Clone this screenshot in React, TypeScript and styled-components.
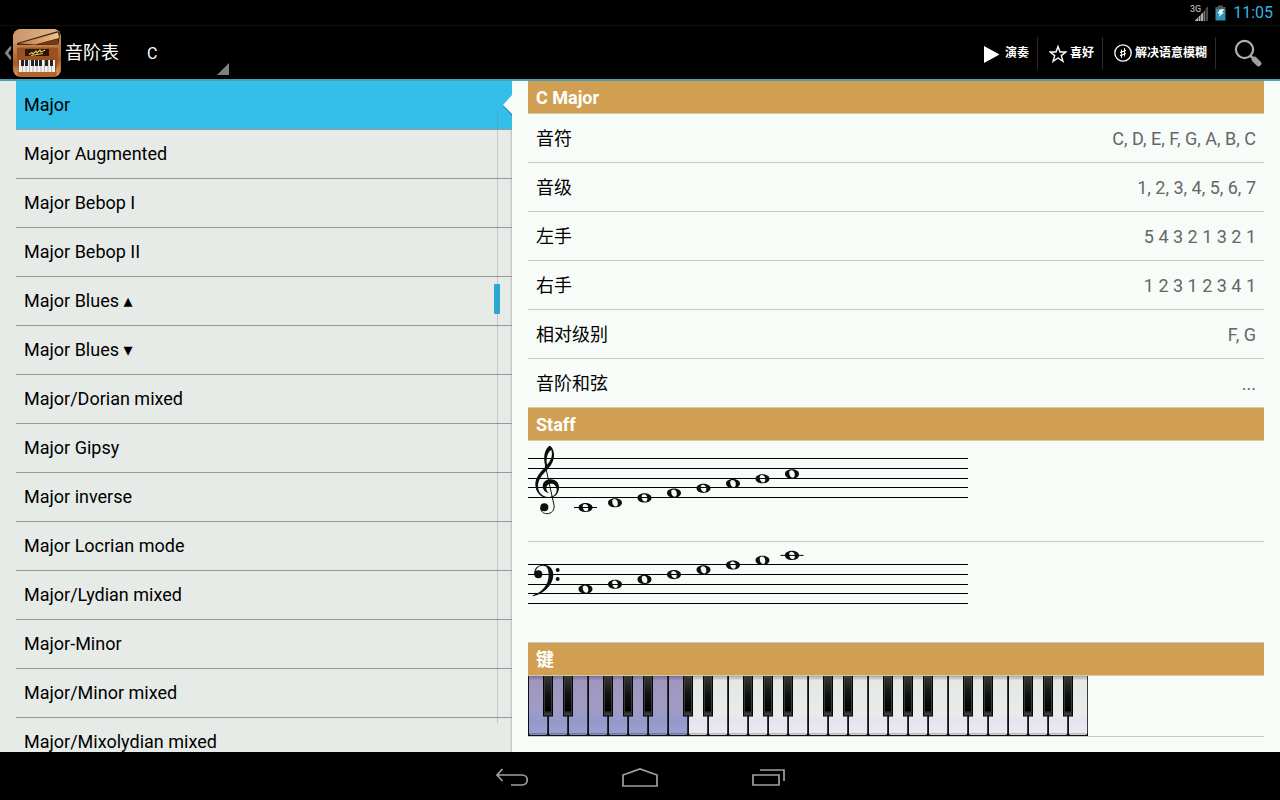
import React, { useState } from 'react';
import styled, { createGlobalStyle, css } from 'styled-components';

const GlobalStyle = createGlobalStyle`
  *, *::before, *::after { box-sizing: border-box; }
  html, body { margin: 0; background: #000; }
  body, button, select {
    font-family: Roboto, "Noto Sans CJK SC", "DejaVu Sans", sans-serif;
  }
`;

const Screen = styled.div`
  display: flex;
  flex-direction: column;
  height: 100vh;
  overflow: hidden;
  background: #000;
`;

/* ---------- status bar ---------- */

const StatusBar = styled.div`
  display: flex;
  align-items: center;
  justify-content: flex-end;
  flex: none;
  height: 25px;
  padding-right: 7px;
  color: #33b5e5;
  font-size: 16px;
  line-height: 24px;
`;

const StatusIcon = styled.svg`
  display: block;
  margin-right: 6px;
`;

/* ---------- action bar ---------- */

const ActionBar = styled.header`
  display: flex;
  align-items: center;
  flex: none;
  height: 56px;
  border-top: 1px solid #101010;
  border-bottom: 2px solid #4a9fbb;
  color: #fff;
`;

const HomeButton = styled.button`
  display: flex;
  align-items: center;
  padding: 0 0 0 4px;
  border: 0;
  background: none;
  cursor: pointer;

  svg { display: block; }
`;

const Title = styled.h1`
  margin: 0 20px 0 4px;
  font-size: 18px;
  line-height: 24px;
  font-weight: 400;
`;

const Spinner = styled.label`
  display: flex;
  align-items: flex-end;
  align-self: stretch;
  width: 90px;
  padding-bottom: 4px;
`;

const KeySelect = styled.select`
  appearance: none;
  flex: 1;
  align-self: stretch;
  min-width: 0;
  padding: 5px 0 0 8px;
  border: 0;
  background: none;
  color: #fff;
  font-size: 16px;
  cursor: pointer;

  option { color: #000; }
`;

const Actions = styled.div`
  display: flex;
  align-items: center;
  margin-left: auto;
`;

const ActionButton = styled.button`
  display: flex;
  align-items: center;
  gap: 3px;
  height: 32px;
  padding: 0 8px 0 11px;
  border: 0;
  border-right: 1px solid #2b2b2b;
  background: none;
  color: #fff;
  font-size: 12px;
  line-height: 16px;
  font-weight: 700;
  cursor: pointer;
`;

const SearchButton = styled.button`
  display: flex;
  align-items: center;
  justify-content: center;
  width: 64px;
  height: 48px;
  padding: 0;
  border: 0;
  background: none;
  cursor: pointer;
`;

/* ---------- panes ---------- */

const Panes = styled.main`
  display: flex;
  flex: 1;
  min-height: 0;
`;

const ListPane = styled.nav`
  position: relative;
  flex: none;
  width: 40%;
  overflow: hidden;
  padding-left: 16px;
  background: #e7ebe8;
  box-shadow: inset -2px 0 2px -1px #b9bdba;
`;

const ScaleList = styled.ul`
  margin: 0;
  padding: 0;
  list-style: none;
`;

const ScaleItem = styled.li`
  position: relative;
  border-bottom: 1px solid #979a98;
`;

const ScaleButton = styled.button<{ $active: boolean }>`
  display: block;
  width: 100%;
  height: 48px;
  padding: 0 8px;
  border: 0;
  background: none;
  color: #000;
  font-size: 18px;
  line-height: 24px;
  text-align: left;
  cursor: pointer;
  ${p => p.$active && css`background: #33bfe9;`}
`;

const Pointer = styled.svg`
  position: absolute;
  right: 0;
  top: 12px;
`;

const ScrollTrack = styled.div`
  position: absolute;
  top: 29px;
  right: 14px;
  bottom: 29px;
  width: 1px;
  background: rgba(110, 120, 120, 0.3);
`;

const ScrollThumb = styled.div`
  position: absolute;
  top: 174px;
  left: -3px;
  width: 6px;
  height: 30px;
  border-radius: 1px;
  background: #2aa7d2;
`;

const DetailPane = styled.section`
  flex: 1;
  min-width: 0;
  overflow: hidden;
  padding: 0 16px;
  background: #f8fcf9;
`;

const SectionTitle = styled.h2`
  margin: 0;
  height: 33px;
  padding: 5px 8px 3px;
  border-bottom: 1px solid #d9c8a8;
  background: #d19f51;
  color: #fff;
  font-size: 18px;
  line-height: 24px;
  font-weight: 700;
`;

const Facts = styled.dl`
  margin: 0;
`;

const Fact = styled.div`
  display: flex;
  align-items: center;
  justify-content: space-between;
  height: 49px;
  padding: 2px 8px 0;
  border-bottom: 1px solid #c6cac7;
  font-size: 18px;
  line-height: 24px;

  &:last-child { border-bottom-color: #d9c8a8; }
`;

const FactName = styled.dt`
  color: #000;
`;

const FactValue = styled.dd`
  margin: 0;
  color: #666;
`;

const Drawing = styled.div`
  border-bottom: 1px solid #c6cac7;

  svg { display: block; }
`;

/* ---------- navigation bar ---------- */

const SystemNav = styled.footer`
  display: flex;
  justify-content: center;
  flex: none;
  height: 48px;
  background: #000;
`;

const NavButton = styled.button`
  display: flex;
  align-items: center;
  justify-content: center;
  width: 128px;
  padding: 4px 0 0;
  border: 0;
  background: none;
  cursor: pointer;
`;

/* ---------- icons ---------- */

const AppIcon = () => (
  <svg width="48" height="48" viewBox="0 0 48 48" aria-hidden="true">
    <defs>
      <linearGradient id="wood" x1="0" y1="0" x2="0" y2="1">
        <stop offset="0" stopColor="#c9966a" />
        <stop offset="0.3" stopColor="#dba877" />
        <stop offset="0.34" stopColor="#99501f" />
        <stop offset="0.65" stopColor="#9a4e1c" />
        <stop offset="1" stopColor="#8b4013" />
      </linearGradient>
      <linearGradient id="lid" x1="0" y1="0" x2="1" y2="0">
        <stop offset="0" stopColor="#c8966b" />
        <stop offset="1" stopColor="#e3b78a" />
      </linearGradient>
      <linearGradient id="inner" x1="0" y1="0" x2="1" y2="0">
        <stop offset="0" stopColor="#b87a45" />
        <stop offset="1" stopColor="#f0c48d" />
      </linearGradient>
      <linearGradient id="side" x1="0" y1="0" x2="0" y2="1">
        <stop offset="0" stopColor="#c58a55" />
        <stop offset="0.6" stopColor="#a35e28" />
        <stop offset="1" stopColor="#dca46a" />
      </linearGradient>
      <clipPath id="iconShape"><rect width="48" height="48" rx="8" /></clipPath>
    </defs>
    <g clipPath="url(#iconShape)">
      <rect width="48" height="48" fill="url(#wood)" />
      <path d="M0 0H48V3L4 14L0 17Z" fill="url(#lid)" />
      <path d="M4 14L45 2L47 4L46 16H4Z" fill="#4a240f" />
      <path d="M6 14.500L45 3.500L46 9L22 15.500Z" fill="url(#inner)" />
      <path d="M24 15.500L45 10V16Z" fill="#6d3c1a" />
      <path d="M3 16H46V30H3Z" fill="#9c5220" />
      <path d="M3 16H46V18.500H3Z" fill="#c07d46" />
      <rect x="12" y="20" width="24" height="7" fill="#2c160b" />
      <path d="M16 25.500l3-2 1 1.500 3-3 1 2 3-3 1 2 4-2M18 26.500l12-2" fill="none" stroke="#e7c65b" strokeWidth="1.100" />
      <path d="M0 17L4 15V31L7 45L4 48H0Z" fill="url(#side)" />
      <path d="M48 6L45 16V31L42 45L44 48H48Z" fill="url(#side)" />
      <rect x="6" y="31" width="36" height="12" fill="#f4f1ee" />
      <path d="M9.500 31V43M13 31V43M16.500 31V43M20 31V43M24 31V43M28 31V43M31.500 31V43M35 31V43M38.500 31V43" stroke="#8b8783" strokeWidth="0.6" />
      <path d="M8 31h3v6h-3zM12 31h3v6h-3zM18 31h3v6h-3zM22 31h3v6h-3zM26 31h3v6h-3zM32 31h3v6h-3zM37 31h3v6h-3z" fill="#22262b" />
      <path d="M4 43H44L43 48H5Z" fill="#b0642a" />
    </g>
  </svg>
);

const UpChevron = () => (
  <svg width="9" height="16" viewBox="0 0 9 16" aria-hidden="true">
    <path d="M6.500 1L1 8L6.500 15L7 12L4 8L7 4Z" fill="#8a8a8a" stroke="#8a8a8a" strokeWidth="0.500" />
  </svg>
);

const PlayIcon = () => (
  <svg width="18" height="20" viewBox="0 0 18 20" aria-hidden="true">
    <path d="M0 3L15.500 11.500L0 20Z" fill="#fff" />
  </svg>
);

const StarIcon = () => (
  <svg width="18" height="20" viewBox="0 0 18 20" aria-hidden="true">
    <path d="M9 3.500L11 9H17L12.300 12.600L14 18.300L9 15L4 18.300L5.700 12.600L1 9H7Z" fill="none" stroke="#fff" strokeWidth="1.400" />
  </svg>
);

const SharpIcon = () => (
  <svg width="18" height="18" viewBox="0 0 18 18" aria-hidden="true">
    <circle cx="9" cy="9" r="8.200" fill="none" stroke="#fff" strokeWidth="1.300" />
    <path d="M7.500 5.500V14M10.500 4V12.500" stroke="#fff" strokeWidth="0.900" />
    <path d="M6 8.500L12 6.300M6 11.700L12 9.500" stroke="#fff" strokeWidth="1.300" />
  </svg>
);

const SearchIcon = () => (
  <svg width="28" height="28" viewBox="0 0 28 28" aria-hidden="true">
    <circle cx="10.500" cy="10.500" r="8.600" fill="none" stroke="#b0b0b0" strokeWidth="2.200" />
    <path d="M16.500 17L19.500 19.500" stroke="#a9a9a9" strokeWidth="2.400" />
    <path d="M20.500 20.500L24.500 24.500" stroke="#a0a0a0" strokeWidth="5.500" strokeLinecap="round" />
  </svg>
);

const SignalIcon = () => (
  <StatusIcon width="19" height="18" viewBox="0 0 19 18" aria-label="3G">
    <text x="0" y="8" fontSize="9" fontWeight="500" fill="#a8a8a8">3G</text>
    <path d="M4.500 17L8 13.500V17ZM8.500 13L10.500 11V17H8.500ZM11 10.500L13 8.500V17H11Z" fill="#b4b4b4" />
    <path d="M13.500 8L15 6.500V17H13.500Z" fill="#7d7d7d" />
    <path d="M15.500 5L18 2V17H15.500Z" fill="#4a4a4a" />
  </StatusIcon>
);

const BatteryIcon = () => (
  <StatusIcon width="12" height="16" viewBox="0 0 12 16" aria-label="Battery">
    <path d="M3 0.500H8V2H10.500V5H0.500V2H3Z" fill="#555" />
    <path d="M0.500 4H10.500V15.500H0.500Z" fill="#2f93b5" />
    <path d="M5 4.500L9 4L7 7.500H9L3.500 12L5 8.500H2.500Z" fill="#fff" />
  </StatusIcon>
);

const BackIcon = () => (
  <svg width="34" height="20" viewBox="0 0 34 20" fill="none" stroke="#a0a0a0" strokeWidth="1.700" aria-hidden="true">
    <path d="M7.500 1L2 7L7.500 13M2 7H27C34 7 34 17 27 17H16" />
  </svg>
);

const HomeIcon = () => (
  <svg width="36" height="20" viewBox="0 0 36 20" fill="none" stroke="#a0a0a0" strokeWidth="1.700" aria-hidden="true">
    <path d="M1 7L18 1L35 7V18H1Z" />
  </svg>
);

const RecentIcon = () => (
  <svg width="34" height="20" viewBox="0 0 34 20" fill="none" stroke="#a0a0a0" strokeWidth="1.700" aria-hidden="true">
    <path d="M2 7H28V17H2ZM9 2H33V13" />
  </svg>
);

/* ---------- notation ---------- */

const TrebleClef = () => (
  <g transform="translate(-8 4) scale(0.3333)" fill="#0c100d">
    <path
      fillRule="evenodd"
      d="M90 2C98 8 103 20 102 34C101 50 93 62 80 76C66 90 55 104 54 122C54 142 66 155 84 156C100 157 111 147 110 133C109 122 102 116 94 116C85 116 78 122 79 131C80 139 84 143 89 145C76 144 68 134 68 123C69 110 79 103 92 103C108 103 118 114 117 129C116 148 102 159 84 159C62 159 46 142 46 118C46 98 59 83 76 65C72 50 71 34 75 22C78 12 84 4 90 2ZM94 15C85 19 77 36 81 59C93 47 99 31 94 15Z"
    />
    <path d="M76 62L102 180C105 196 94 206 81 206C70 206 62 200 62 188" fill="none" stroke="#0c100d" strokeWidth="3" />
    <circle cx="73" cy="187" r="12" />
  </g>
);

const BassClef = () => (
  <g transform="translate(-8 -7) scale(0.3333)" fill="#0c100d">
    <circle cx="55" cy="118" r="12" />
    <path d="M43 118C41 102 52 89 70 89C88 89 100 101 100 120C99 153 68 178 39 184L38 181C64 172 86 152 86 120C86 102 81 92 68 92C55 92 46 102 47 114Z" />
    <circle cx="113" cy="105" r="6" />
    <circle cx="113" cy="132" r="6" />
  </g>
);

type StaffProps = { clef: 'treble' | 'bass'; lines: number[]; firstNote: number; ledger: number };

const Staff = ({ clef, lines, firstNote, ledger }: StaffProps) => (
  <Drawing>
    <svg width="440" height="100" viewBox="0 0 440 100" role="img" aria-label={`C Major, ${clef} clef`}>
      {lines.map(y => <rect key={y} x="0" y={y} width="440" height="1" />)}
      {clef === 'treble' ? <TrebleClef /> : <BassClef />}
      {Array.from({ length: 8 }, (_, i) => {
        const x = 57.5 + i * 29.5;
        const y = firstNote - i * 4.8;
        return (
          <g key={i} transform={`translate(${x} ${y})`} fill="#0c100d">
            <path fillRule="evenodd" d="M-7 0C-7 -6.100 7 -6.100 7 0C7 6.100 -7 6.100 -7 0ZM-2.800 -1.500C-2.800 2 -1 4 1 3.700C3 3.400 3 0.800 2.600 -1C1.800 -4.200 -2.600 -4.600 -2.800 -1.500Z" />
            {i === ledger && <rect x="-11.500" y="-0.500" width="23" height="1" fill="#000" />}
          </g>
        );
      })}
    </svg>
  </Drawing>
);

const WHITE_KEYS = 28;
const BLACK_AFTER = [1, 2, 4, 5, 6];

const Keyboard = () => (
  <Drawing>
    <svg width="560" height="60" viewBox="0 0 560 60" role="img" aria-label="C Major">
      <defs>
        <linearGradient id="whiteKey" x1="0" y1="0" x2="0" y2="1">
          <stop offset="0" stopColor="#a9aaa9" />
          <stop offset="0.08" stopColor="#e6e8e6" />
          <stop offset="0.65" stopColor="#e8ebe8" />
          <stop offset="0.75" stopColor="#e6e4f0" />
          <stop offset="1" stopColor="#eae9f3" />
        </linearGradient>
        <linearGradient id="playedKey" x1="0" y1="0" x2="0" y2="1">
          <stop offset="0" stopColor="#77709a" />
          <stop offset="0.08" stopColor="#a096be" />
          <stop offset="0.55" stopColor="#a09cc6" />
          <stop offset="0.75" stopColor="#9499cb" />
          <stop offset="1" stopColor="#9a9fd3" />
        </linearGradient>
        <linearGradient id="blackKey" x1="0" y1="0" x2="0" y2="1">
          <stop offset="0" stopColor="#353a37" />
          <stop offset="0.5" stopColor="#111312" />
          <stop offset="1" stopColor="#000" />
        </linearGradient>
      </defs>
      <rect width="560" height="60" fill="#0d100f" />
      {Array.from({ length: WHITE_KEYS }, (_, i) => (
        <g key={i}>
          <path
            d={`M${i * 20 + 1} 0h18.200v57q0 2 -2 2h-14.200q-2 0 -2 -2z`}
            fill={i < 8 ? 'url(#playedKey)' : 'url(#whiteKey)'}
          />
          <rect x={i * 20 + 2} y="57" width="16" height="1.500" fill={i < 8 ? '#7479ab' : '#b9bcbf'} />
        </g>
      ))}
      {Array.from({ length: WHITE_KEYS }, (_, i) => i)
        .filter(i => BLACK_AFTER.includes(i % 7))
        .map(i => (
          <g key={i}>
            <rect x={i * 20 - 5} y="0" width="10" height="40.500" fill="#050606" />
            <rect x={i * 20 - 3.5} y="0" width="7" height="36" fill="url(#blackKey)" stroke="#4a4e4b" strokeWidth="0.700" />
            <rect x={i * 20 - 4} y="36.500" width="8" height="3" fill="#3a3d3b" />
          </g>
        ))}
    </svg>
  </Drawing>
);

/* ---------- data ---------- */

const SCALES = [
  'Major',
  'Major Augmented',
  'Major Bebop I',
  'Major Bebop II',
  'Major Blues ▴',
  'Major Blues ▾',
  'Major/Dorian mixed',
  'Major Gipsy',
  'Major inverse',
  'Major Locrian mode',
  'Major/Lydian mixed',
  'Major-Minor',
  'Major/Minor mixed',
  'Major/Mixolydian mixed',
];

const FACTS: [string, string][] = [
  ['音符', 'C, D, E, F, G, A, B, C'],
  ['音级', '1, 2, 3, 4, 5, 6, 7'],
  ['左手', '5 4 3 2 1 3 2 1'],
  ['右手', '1 2 3 1 2 3 4 1'],
  ['相对级别', 'F, G'],
  ['音阶和弦', '...'],
];

export default function App() {
  const [selected, setSelected] = useState(0);

  return (
    <>
      <GlobalStyle />
      <Screen>
        <StatusBar>
          <SignalIcon />
          <BatteryIcon />
          <time>11:05</time>
        </StatusBar>
        <ActionBar>
          <HomeButton aria-label="Up">
            <UpChevron />
            <AppIcon />
          </HomeButton>
          <Title>音阶表</Title>
          <Spinner>
            <KeySelect aria-label="Key" defaultValue="C">
              <option>C</option>
            </KeySelect>
            <svg width="12" height="12" viewBox="0 0 12 12" aria-hidden="true">
              <path d="M12 0V12H0Z" fill="#808080" />
            </svg>
          </Spinner>
          <Actions>
            <ActionButton><PlayIcon />演奏</ActionButton>
            <ActionButton><StarIcon />喜好</ActionButton>
            <ActionButton><SharpIcon />解决语意模糊</ActionButton>
            <SearchButton aria-label="Search"><SearchIcon /></SearchButton>
          </Actions>
        </ActionBar>
        <Panes>
          <ListPane>
            <ScaleList>
              {SCALES.map((name, i) => (
                <ScaleItem key={name}>
                  <ScaleButton $active={i === selected} onClick={() => setSelected(i)}>{name}</ScaleButton>
                  {i === selected && (
                    <Pointer width="10" height="24" viewBox="0 0 10 24" aria-hidden="true">
                      <path d="M10 4L1 13L10 23Z" fill="#1d86a8" />
                      <path d="M10 2L1 12L10 21Z" fill="#f8fcf9" />
                    </Pointer>
                  )}
                </ScaleItem>
              ))}
            </ScaleList>
            <ScrollTrack><ScrollThumb /></ScrollTrack>
          </ListPane>
          <DetailPane>
            <SectionTitle>C Major</SectionTitle>
            <Facts>
              {FACTS.map(([name, value]) => (
                <Fact key={name}>
                  <FactName>{name}</FactName>
                  <FactValue>{value}</FactValue>
                </Fact>
              ))}
            </Facts>
            <SectionTitle>Staff</SectionTitle>
            <Staff clef="treble" lines={[17, 27, 37, 46, 56]} firstNote={66.5} ledger={0} />
            <Staff clef="bass" lines={[22, 32, 42, 51, 61]} firstNote={47} ledger={7} />
            <SectionTitle>键</SectionTitle>
            <Keyboard />
          </DetailPane>
        </Panes>
        <SystemNav>
          <NavButton aria-label="Back"><BackIcon /></NavButton>
          <NavButton aria-label="Home"><HomeIcon /></NavButton>
          <NavButton aria-label="Recent apps"><RecentIcon /></NavButton>
        </SystemNav>
      </Screen>
    </>
  );
}
